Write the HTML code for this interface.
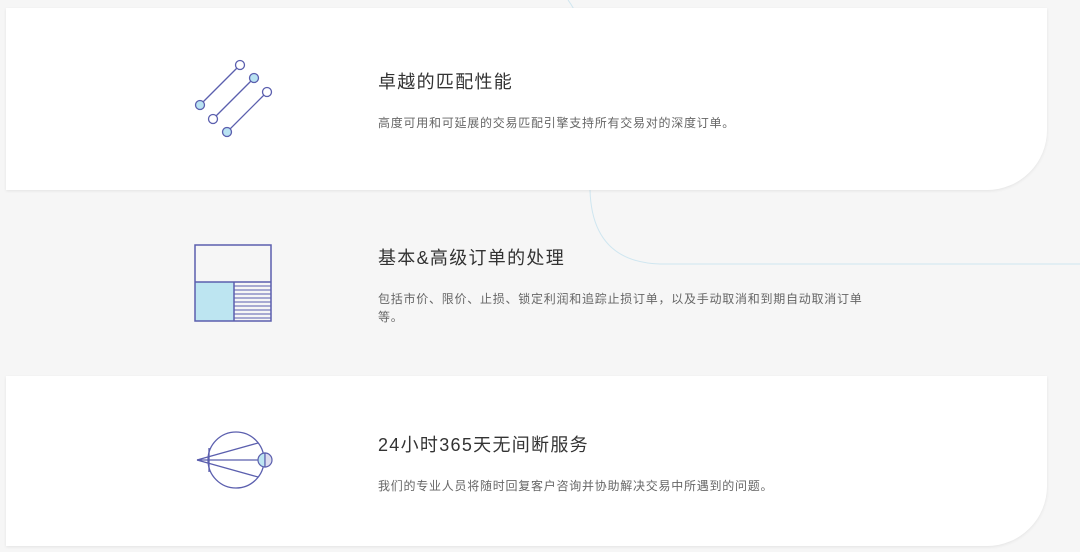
<!DOCTYPE html>
<html><head><meta charset="utf-8"><style>
body{margin:0;width:1080px;height:552px;background:#f6f6f6;position:relative;overflow:hidden;font-family:"Liberation Sans","Noto Sans CJK SC",sans-serif}
.card{position:absolute;left:6px;width:1041px;background:#fff;border-radius:0 0 60px 0;box-shadow:0 1px 3px rgba(0,0,0,.08)}
.t{position:absolute;left:378px;font-size:18px;letter-spacing:1.3px;color:#333;white-space:nowrap}
.d{position:absolute;left:378px;font-size:12px;letter-spacing:0.75px;color:#666;line-height:18px;width:500px}
svg.i{position:absolute}
</style></head><body>
<svg style="position:absolute;left:0;top:0" width="1080" height="552"><path d="M568,0 Q590,30 590,90 L590,190 Q592,262 660,264 L1080,264" fill="none" stroke="#cfe6f0" stroke-width="1"/></svg>
<div class="card" style="top:8px;height:182px"></div>
<div class="card" style="top:376px;height:170px"></div>

<svg class="i" style="left:190px;top:56px" width="90" height="82" viewBox="190 56 90 82">
<g stroke="#5b5fae" stroke-width="1.3" fill="none"><line x1="200" y1="105" x2="240" y2="65"/><line x1="213" y1="119" x2="254" y2="78"/><line x1="227" y1="132" x2="267" y2="92"/></g>
<g stroke="#5b5fae" stroke-width="1.3"><circle cx="240" cy="65" r="4.5" fill="#fff"/><circle cx="200" cy="105" r="4.5" fill="#b9e3f2"/><circle cx="254" cy="78" r="4.5" fill="#b9e3f2"/><circle cx="213" cy="119" r="4.5" fill="#fff"/><circle cx="267" cy="92" r="4.5" fill="#fff"/><circle cx="227" cy="132" r="4.5" fill="#b9e3f2"/></g>
</svg>
<div class="t" style="top:68px">卓越的匹配性能</div>
<div class="d" style="top:114px">高度可用和可延展的交易匹配引擎支持所有交易对的深度订单。</div>

<svg class="i" style="left:190px;top:240px" width="90" height="86" viewBox="190 240 90 86">
<rect x="195" y="282" width="39" height="39" fill="#bde5f1"/>
<g stroke="#5b5fae" stroke-width="1">
<line x1="234" y1="286" x2="271" y2="286"/><line x1="234" y1="290" x2="271" y2="290"/><line x1="234" y1="294" x2="271" y2="294"/><line x1="234" y1="298" x2="271" y2="298"/><line x1="234" y1="302" x2="271" y2="302"/><line x1="234" y1="306" x2="271" y2="306"/><line x1="234" y1="310" x2="271" y2="310"/><line x1="234" y1="314" x2="271" y2="314"/><line x1="234" y1="318" x2="271" y2="318"/></g>
<g stroke="#5b5fae" stroke-width="1.5" fill="none"><rect x="195" y="245" width="76" height="76"/><line x1="195" y1="282" x2="271" y2="282"/><line x1="234" y1="282" x2="234" y2="321"/></g>
</svg>
<div class="t" style="top:244px">基本&amp;高级订单的处理</div>
<div class="d" style="top:290px;width:500px">包括市价、限价、止损、锁定利润和追踪止损订单，以及手动取消和到期自动取消订单<br>等。</div>

<svg class="i" style="left:190px;top:428px" width="90" height="66" viewBox="190 428 90 66">
<g stroke="#5b5fae" stroke-width="1.3" fill="none"><circle cx="236" cy="460" r="28"/><line x1="197" y1="460" x2="265" y2="460"/><line x1="197" y1="460" x2="258" y2="443"/><line x1="197" y1="460" x2="258" y2="477"/><line x1="209" y1="448" x2="209" y2="472"/></g>
<path d="M265,453 A7,7 0 0 0 265,467 Z" fill="#bde5f1" stroke="#5b5fae" stroke-width="1.2"/>
<path d="M265,453 A7,7 0 0 1 265,467 Z" fill="#dde" stroke="#5b5fae" stroke-width="1.2"/>
</svg>
<div class="t" style="top:431px">24小时365天无间断服务</div>
<div class="d" style="top:477px">我们的专业人员将随时回复客户咨询并协助解决交易中所遇到的问题。</div>
</body></html>
